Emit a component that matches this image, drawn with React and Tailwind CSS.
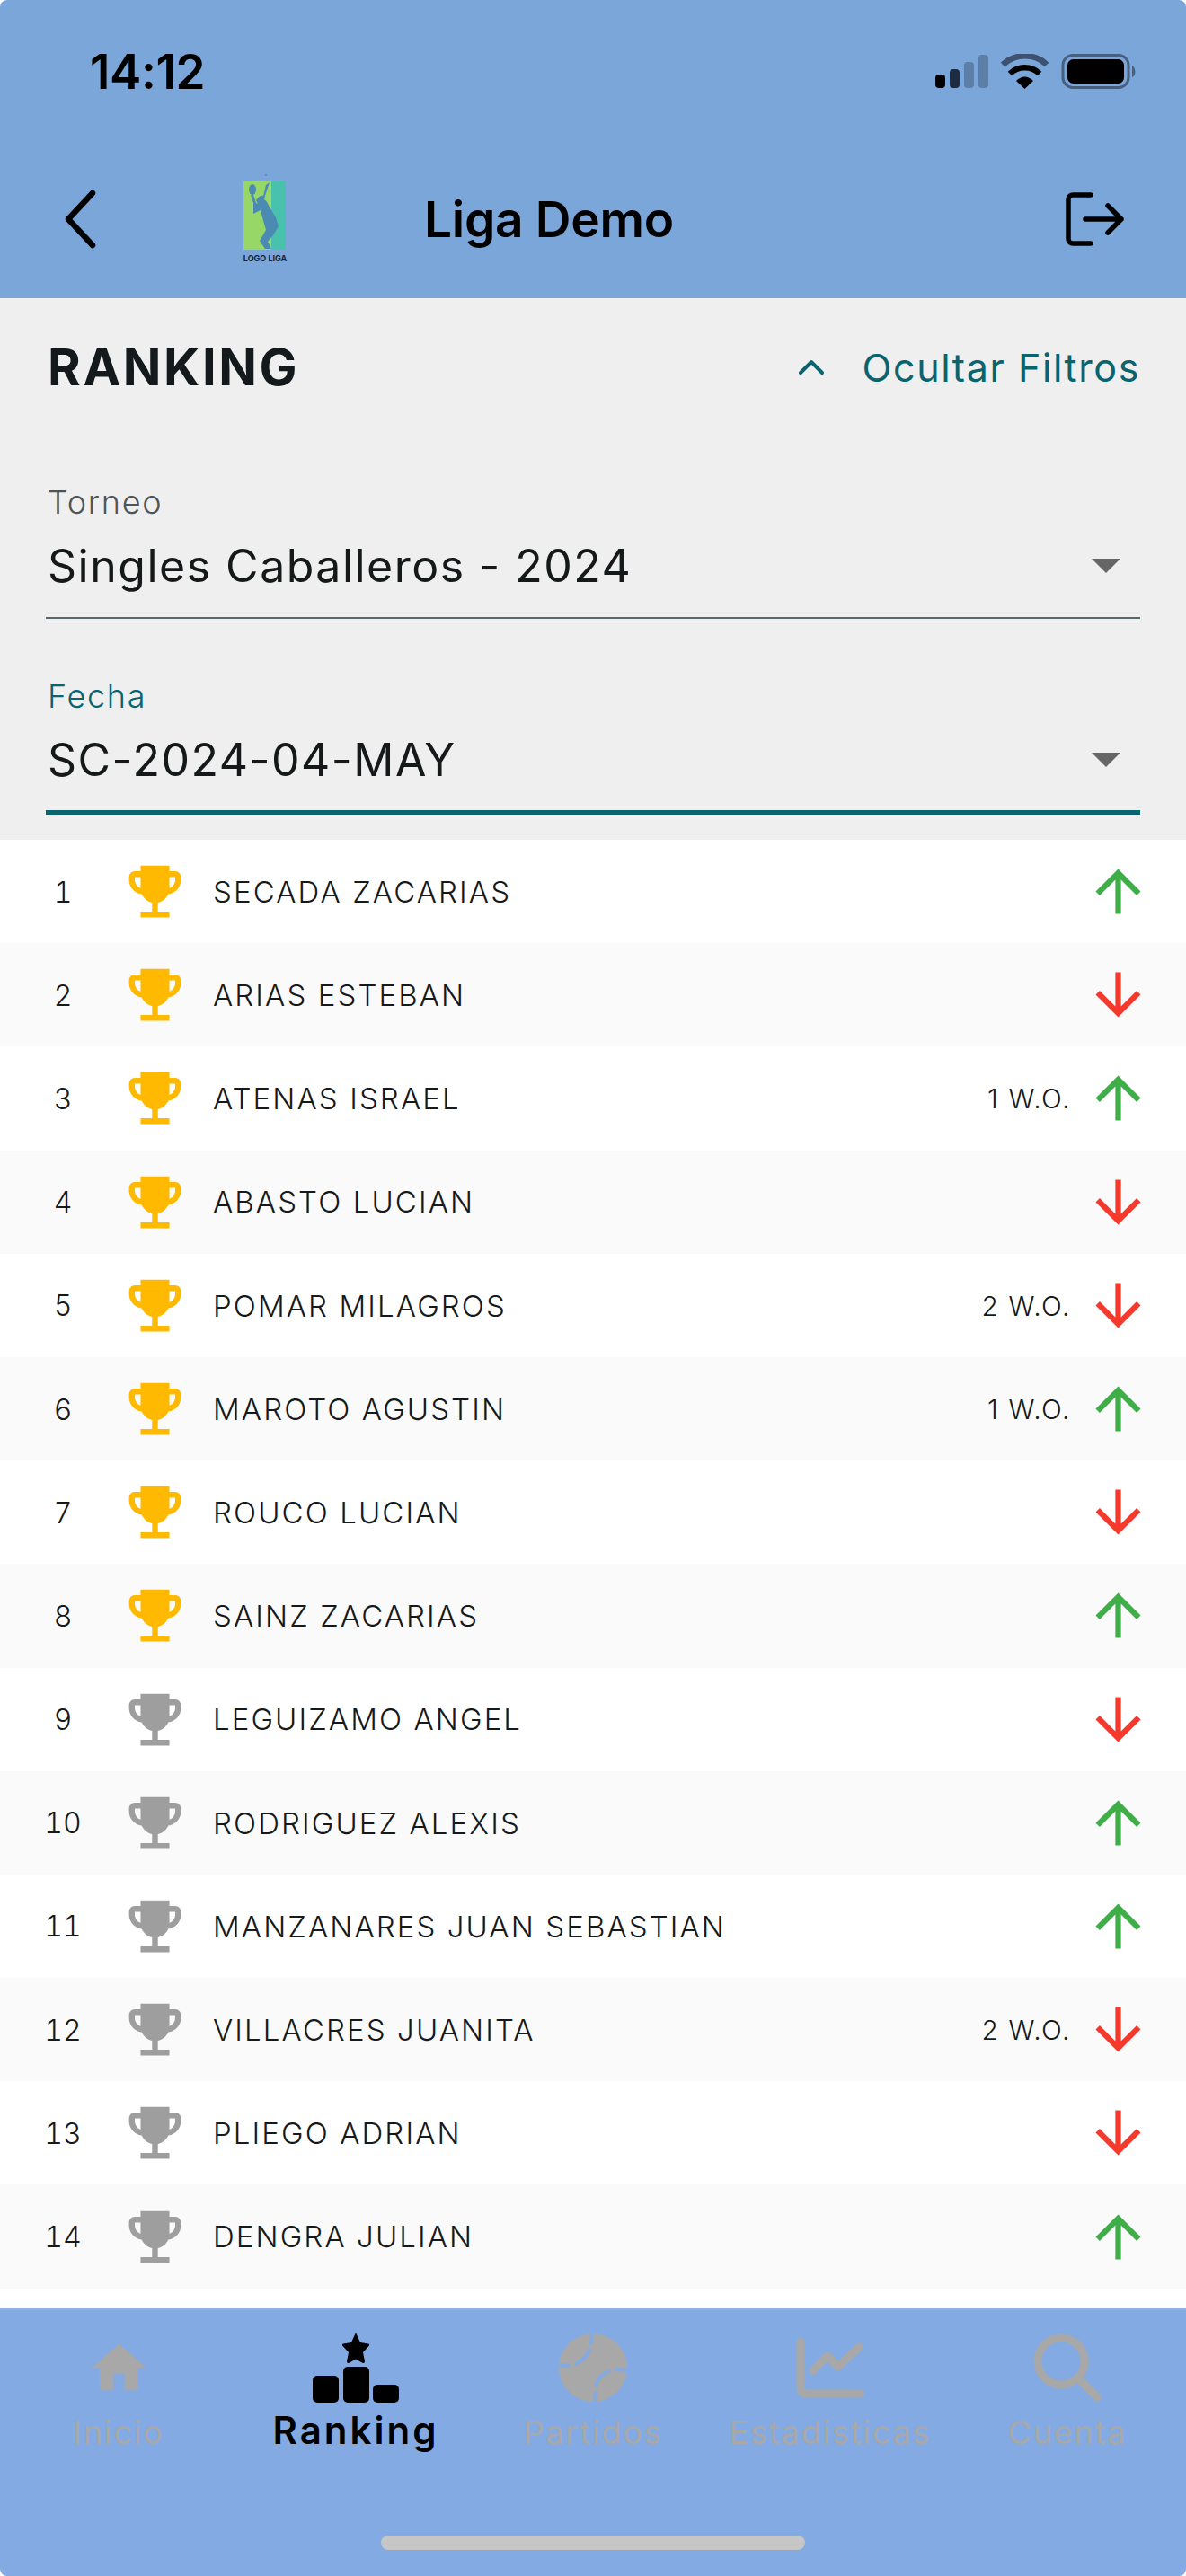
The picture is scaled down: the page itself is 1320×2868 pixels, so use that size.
const rows = [
  ["SECADA ZACARIAS", "", 1, 1], ["ARIAS ESTEBAN", "", 0, 1], ["ATENAS ISRAEL", "1 W.O.", 1, 1], ["ABASTO LUCIAN", "", 0, 1],
  ["POMAR MILAGROS", "2 W.O.", 0, 1], ["MAROTO AGUSTIN", "1 W.O.", 1, 1], ["ROUCO LUCIAN", "", 0, 1], ["SAINZ ZACARIAS", "", 1, 1],
  ["LEGUIZAMO ANGEL", "", 0, 0], ["RODRIGUEZ ALEXIS", "", 1, 0], ["MANZANARES JUAN SEBASTIAN", "", 1, 0], ["VILLACRES JUANITA", "2 W.O.", 0, 0],
  ["PLIEGO ADRIAN", "", 0, 0], ["DENGRA JULIAN", "", 1, 0],
];

function Trophy({ gold }) {
  return (
    <svg viewBox="0 0 24 24" className={"h-[77px] w-[77px] shrink-0 " + (gold ? "text-[#ffb900]" : "text-[#9e9e9e]")} fill="currentColor">
      <path d="M19 5h-2V3H7v2H5c-1.1 0-2 .9-2 2v1c0 2.55 1.92 4.63 4.39 4.94.63 1.5 1.98 2.63 3.61 2.96V19H7v2h10v-2h-4v-3.1c1.63-.33 2.98-1.46 3.61-2.96C19.08 12.63 21 10.55 21 8V7c0-1.1-.9-2-2-2zM5 8V7h2v3.82C5.84 10.4 5 9.3 5 8zm14 0c0 1.3-.84 2.4-2 2.82V7h2v1z" />
    </svg>
  );
}

function Arrow({ up }) {
  return (
    <svg viewBox="0 0 24 24" className={"h-[75px] w-[75px] shrink-0 " + (up ? "text-[#3fae49]" : "text-[#f5392d]")} fill="currentColor">
      <path d={up ? "M4 12l1.41 1.41L11 7.83V20h2V7.83l5.58 5.59L20 12l-8-8-8 8z" : "M20 12l-1.41-1.41L13 16.17V4h-2v12.17l-5.58-5.59L4 12l8 8 8-8z"} />
    </svg>
  );
}

function StatusIcons() {
  return (
    <svg viewBox="0 0 226 40" className="h-[40px] w-[226px]">
      <rect x="1" y="23" width="11" height="15" rx="4" fill="#000" />
      <rect x="17" y="17" width="11" height="21" rx="4" fill="#1f2c40" />
      <rect x="33" y="9" width="11" height="29" rx="4" fill="#5d7ea6" />
      <rect x="49" y="1" width="11" height="37" rx="4" fill="#5d7ea6" />
      <path d="M76 12 C 90 -1, 112 -1, 125 12" fill="none" stroke="#3c5270" strokeWidth="6.5" />
      <path d="M84 22 C 93 13, 108 13, 117 22" fill="none" stroke="#000" strokeWidth="6.5" />
      <path d="M91 30 C 97 24, 104 24, 110 30 L100.5 39 Z" fill="#000" />
      <rect x="143" y="1.5" width="73" height="36" rx="11" fill="none" stroke="#47607f" strokeWidth="3" />
      <rect x="148" y="6" width="63" height="27" rx="6.5" fill="#000" />
      <path d="M220 13 C 224 15, 225 24, 220 26 Z" fill="#47607f" />
    </svg>
  );
}

function Logo() {
  return (
    <div className="mb-[5px] flex w-[60px] shrink-0 flex-col items-center">
      <svg viewBox="0 0 60 90" className="h-[90px] w-[60px]">
        <rect x="6" y="12" width="31" height="76" fill="#97d768" />
        <rect x="37" y="12" width="16" height="76" fill="#49c2ad" />
        <circle cx="31" cy="5" r="1" fill="#4c86b5" />
        <path d="M35 13 L30 28 L29 32 C 32 34 33 36 34 39 L42 52 L45 62 L39 72 L33 79 L37 87 L30 87 L24 78 L31 66 L27 52 L25 44 L17 48 L17 36 L14 27 L17 27 L20 36 L22 37 L20 33 C 22 29 26 27 28 28 L31 16 Z" fill="#4b8ab2" />
        <ellipse cx="16" cy="21" rx="4" ry="6" fill="#4b8ab2" />
      </svg>
      <span className="mt-[3px] whitespace-nowrap text-[9px] font-bold leading-[10px] text-[#13233c]">LOGO LIGA</span>
    </div>
  );
}

function Field({ label, value, active }) {
  return (
    <div className={active ? "mt-[64px]" : "mt-[96px]"}>
      <div className={"pl-[2px] text-[36px] font-light leading-[44px] tracking-[1.7px] " + (active ? "text-[#0a6470]" : "text-[#4f5557]")}>{label}</div>
      <div className="mt-[18px] flex h-[62px] items-center justify-between pl-[2px] pr-[22px]">
        <span className="text-[50px] font-normal tracking-[1.5px] text-[#16191a]">{value}</span>
        <span className="h-0 w-0 border-x-[16px] border-t-[16px] border-x-transparent border-t-[#666666]" />
      </div>
      <div className={active ? "mt-[25px] h-[5px] bg-[#0a6470]" : "mt-[26px] h-[2px] bg-[#58696b]"} />
    </div>
  );
}

function NavItem({ icon, label, active }) {
  return (
    <div className="flex flex-col items-center">
      <div className="flex h-[82px] items-center justify-center">{icon}</div>
      <span className={active ? "mt-[4px] text-[42px] font-semibold leading-[50px] tracking-[3px] text-black" : "mt-[6px] text-[36px] font-normal leading-[50px] tracking-[1.8px] text-[#a8a8a8]"}>{label}</span>
    </div>
  );
}

const G = "#a8a8a8";

export default function App() {
  return (
    <div className="flex h-[2868px] w-[1320px] flex-col overflow-hidden rounded-[8px] bg-white font-['Inter',sans-serif]">
      <header className="h-[332px] shrink-0 bg-[#7ba6da]">
        <div className="flex h-[190px] items-start justify-between pl-[100px] pr-[54px] pt-[58px]">
          <span className="text-[53px] font-semibold leading-[44px] tracking-[-0.4px] text-black">14:12</span>
          <div className="pt-[2px]"><StatusIcons /></div>
        </div>
        <div className="flex items-center justify-between pl-[66px] pr-[68px]">
          <div className="flex items-center">
            <svg viewBox="0 0 46 70" className="h-[70px] w-[46px]" fill="none" stroke="#000" strokeWidth="6.5" strokeLinecap="round" strokeLinejoin="round">
              <path d="M37 6 L10 35 L37 64" />
            </svg>
            <div className="ml-[153px]"><Logo /></div>
            <span className="ml-[147px] text-[55px] font-semibold leading-[64px] tracking-[-0.3px] text-black">Liga Demo</span>
          </div>
          <svg viewBox="0 0 66 60" className="h-[60px] w-[66px]" fill="none" stroke="#000" strokeWidth="5.5" strokeLinecap="round" strokeLinejoin="round">
            <path d="M28 3 H8 a5 5 0 0 0 -5 5 V52 a5 5 0 0 0 5 5 H28" />
            <path d="M22 30 H62 M47 15 L62 30 L47 45" />
          </svg>
        </div>
      </header>

      <section className="h-[603px] shrink-0 bg-[#efefef] pl-[51px] pr-[51px] pt-[45px]">
        <div className="flex h-[64px] items-center justify-between">
          <span className="pl-[2px] text-[56px] font-bold leading-[64px] tracking-[2.6px] text-[#14191c]">RANKING</span>
          <div className="flex items-center">
            <svg viewBox="0 0 30 20" className="h-[20px] w-[30px]" fill="none" stroke="#0a6470" strokeWidth="4" strokeLinecap="round" strokeLinejoin="round">
              <path d="M3 16 L15 4 L27 16" />
            </svg>
            <span className="ml-[42px] text-[43px] leading-[64px] tracking-[1.6px] text-[#0a6470]">Ocultar Filtros</span>
          </div>
        </div>
        <Field label="Torneo" value="Singles Caballeros - 2024" />
        <Field label="Fecha" value="SC-2024-04-MAY" active />
      </section>

      <ul className="flex flex-col">
        {rows.map((r, i) => (
          <li key={r[0]} className={"flex h-[115.2px] items-center pr-[38px] " + (i % 2 ? "bg-[#fafafa]" : "bg-white")}>
            <span className="ml-[30px] mt-[2px] w-[80px] text-center text-[32px] font-light tabular-nums text-[#16191a]">{i + 1}</span>
            <span className="ml-[24px]"><Trophy gold={r[3]} /></span>
            <span className="ml-[26px] mt-[2px] text-[33px] font-light tracking-[2.1px] text-[#16191a]">{r[0]}</span>
            <span className="ml-auto mr-[15px] mt-[2px] text-[30px] font-light tracking-[1.6px] text-[#16191a]">{r[1]}</span>
            <Arrow up={r[2]} />
          </li>
        ))}
      </ul>

      <nav className="mt-auto h-[298px] shrink-0 border-t-2 border-[#8fb0e8] bg-[#83aae2]">
        <div className="grid grid-cols-5 pt-[23px]">
          <NavItem label="Inicio" icon={
            <svg viewBox="0 0 24 24" className="h-[73px] w-[73px]" fill={G}><path d="M10 20v-6h4v6h5v-8h3L12 3 2 12h3v8z" /></svg>
          } />
          <NavItem active label="Ranking" icon={
            <svg viewBox="0 0 96 78" className="h-[78px] w-[96px]" fill="#000">
              <path d="M48 0 L53 11 L62 12.5 Q 64 13 62.5 15 L56 22 L58 32 Q 58 35 55 33.5 L48 29.5 L41 33.5 Q 38 35 38 32 L40 22 L33.5 15 Q 32 13 34 12.5 L43 11 Z" />
              <rect x="0" y="48" width="29" height="30" rx="5" />
              <rect x="34" y="38" width="29" height="40" rx="5" />
              <rect x="67" y="58" width="29" height="20" rx="5" />
            </svg>
          } />
          <NavItem label="Partidos" icon={
            <svg viewBox="0 0 76 76" className="h-[76px] w-[76px]">
              <circle cx="38" cy="38" r="38" fill={G} />
              <g fill="none" stroke="#83aae2" strokeWidth="4" strokeLinecap="round">
                <path d="M37 1 L36 11" />
                <path d="M34 18 C 32 24, 28 29, 19 34" />
                <path d="M1 35 L11 36" />
                <path d="M56 42 C 46 46, 42 52, 41 58" />
                <path d="M41 65 L40 75" />
                <path d="M64 40 L75 41" />
              </g>
            </svg>
          } />
          <NavItem label="Estadisticas" icon={
            <svg viewBox="0 0 76 68" className="h-[68px] w-[76px]" fill="none" stroke={G} strokeWidth="9" strokeLinecap="round" strokeLinejoin="round">
              <path d="M5 5 V56 Q 5 63 12 63 H71" />
              <path d="M19 37 L35 21 L47 33 L70 11" />
            </svg>
          } />
          <NavItem label="Cuenta" icon={
            <svg viewBox="0 0 76 76" className="h-[76px] w-[76px]" fill="none" stroke={G} strokeWidth="9" strokeLinecap="round">
              <circle cx="31" cy="31" r="26" />
              <path d="M50 50 L71 71" />
            </svg>
          } />
        </div>
        <div className="mx-auto mt-[90px] h-[16px] w-[472px] rounded-full bg-[#c6c6c6]" />
      </nav>
    </div>
  );
}
